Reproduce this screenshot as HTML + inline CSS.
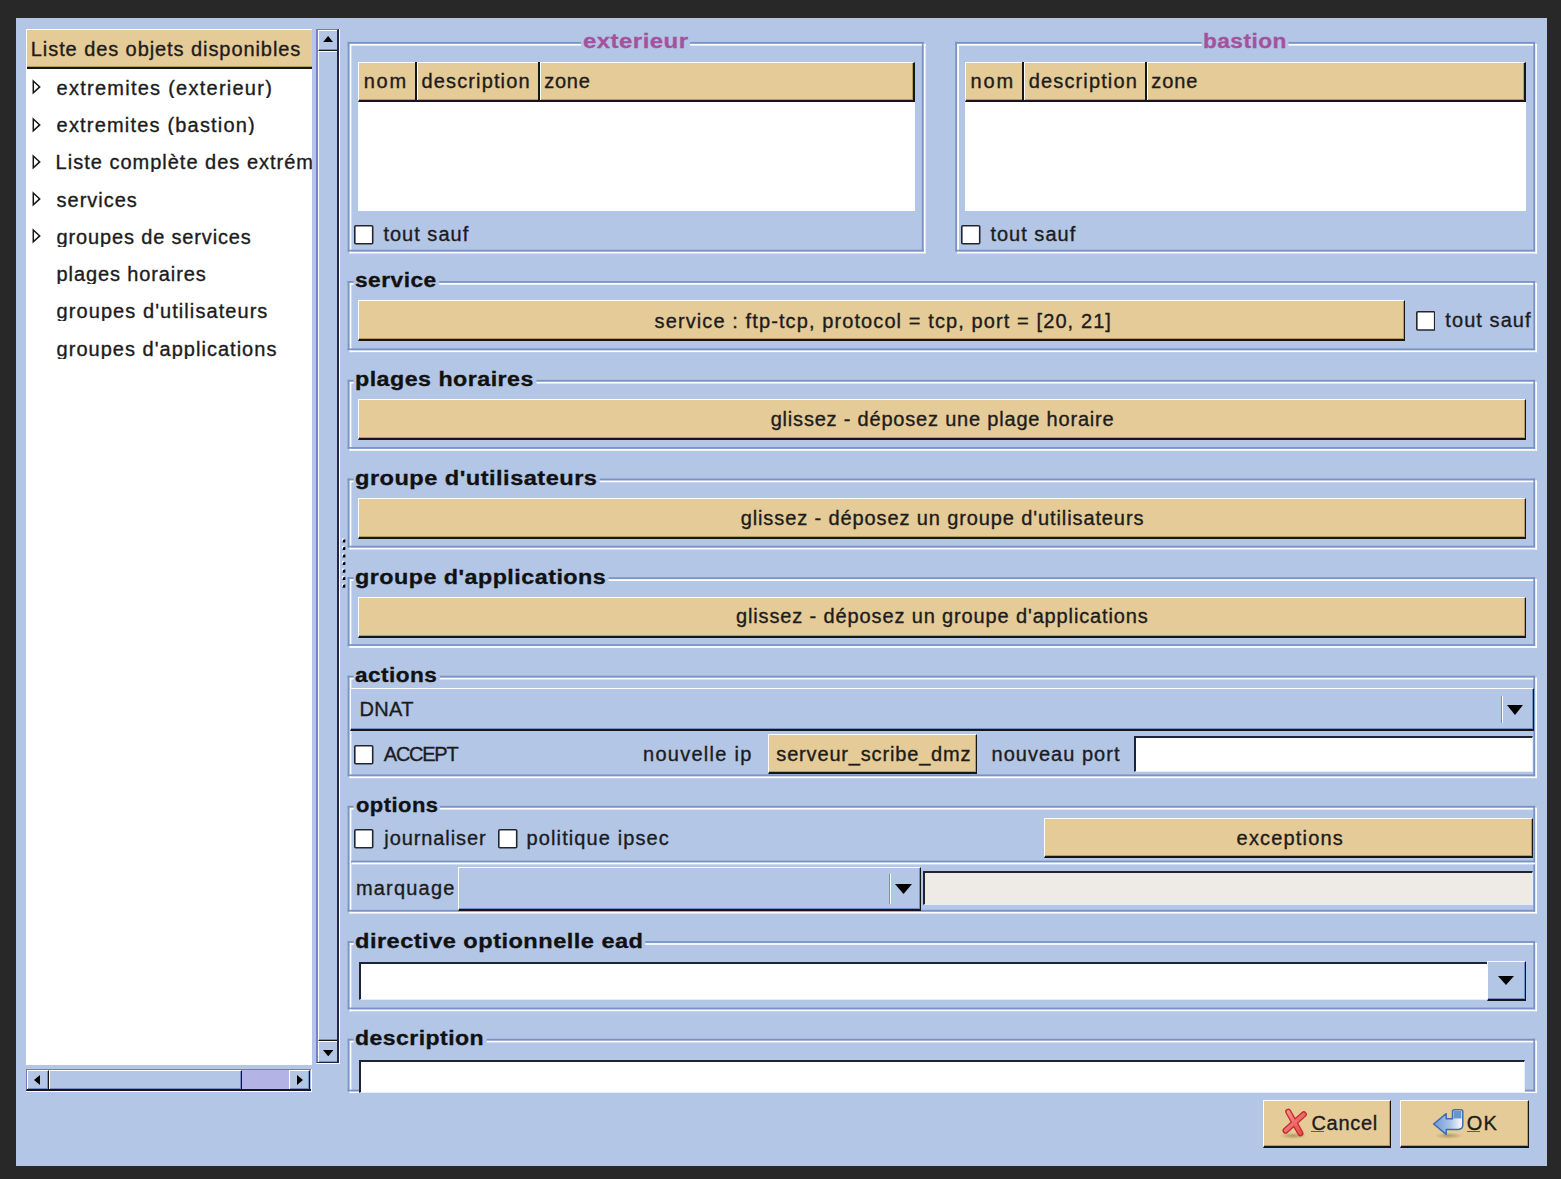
<!DOCTYPE html>
<html><head><meta charset="utf-8"><style>
html,body{margin:0;padding:0;}
body{width:1561px;height:1179px;background:#282828;position:relative;overflow:hidden;font-family:"Liberation Sans",sans-serif;}
.a{position:absolute;}
.t{font-size:20px;line-height:20px;white-space:pre;}
svg{display:block;}
</style></head><body>
<div class="a" style="left:16px;top:18px;width:1531px;height:1148px;background:#b3c6e6;"></div>
<div class="a" style="left:26px;top:29px;width:286px;height:1036px;background:#ffffff;"></div>
<div class="a" style="left:27px;top:30px;width:285px;height:39px;background:#e5cb97;border-bottom:2px solid #161616;box-sizing:border-box;box-shadow:inset 0 -1px 0 #b89a60;"></div>
<svg class="a" style="left:31px;top:79.2px" width="12" height="16"><path d="M2.3,2 L8.7,7.9 L2.3,13.8 Z" fill="none" stroke="#151515" stroke-width="1.5"/></svg>
<svg class="a" style="left:31px;top:116.5px" width="12" height="16"><path d="M2.3,2 L8.7,7.9 L2.3,13.8 Z" fill="none" stroke="#151515" stroke-width="1.5"/></svg>
<svg class="a" style="left:31px;top:153.7px" width="12" height="16"><path d="M2.3,2 L8.7,7.9 L2.3,13.8 Z" fill="none" stroke="#151515" stroke-width="1.5"/></svg>
<svg class="a" style="left:31px;top:191.0px" width="12" height="16"><path d="M2.3,2 L8.7,7.9 L2.3,13.8 Z" fill="none" stroke="#151515" stroke-width="1.5"/></svg>
<svg class="a" style="left:31px;top:228.3px" width="12" height="16"><path d="M2.3,2 L8.7,7.9 L2.3,13.8 Z" fill="none" stroke="#151515" stroke-width="1.5"/></svg>
<div class="a" style="left:316px;top:29px;width:23px;height:1034px;background:#b3c6e6;border-left:2px solid #7e7ec8;border-top:1px solid #7676c4;border-right:2px solid #20283a;border-bottom:1px solid #20283a;box-sizing:border-box;"></div>
<div class="a" style="left:339px;top:29px;width:1px;height:1035px;background:#ffffff;"></div>
<div class="a" style="left:316px;top:1063px;width:24px;height:1px;background:#ffffff;"></div>
<div class="a" style="left:318px;top:30px;width:19px;height:21px;background:#b3c6e6;border-top:1px solid #ffffff;border-left:1px solid #ffffff;border-bottom:1px solid #161616;box-sizing:border-box;box-shadow:inset 0 -1px 0 #7591c4;"></div>
<svg class="a" style="left:322.6px;top:36.2px" width="10.2" height="6.2"><path d="M0,6.2 L10.2,6.2 L5.1,0 Z" fill="#000"/></svg>
<div class="a" style="left:318px;top:51px;width:19px;height:990px;background:#b3c6e6;border-top:1px solid #ffffff;border-left:1px solid #ffffff;border-bottom:1px solid #161616;box-sizing:border-box;box-shadow:inset 0 -1px 0 #7591c4;"></div>
<div class="a" style="left:318px;top:1041px;width:19px;height:21px;background:#b3c6e6;border-top:1px solid #ffffff;border-left:1px solid #ffffff;box-sizing:border-box;box-shadow:inset 0 -1px 0 #7591c4;"></div>
<svg class="a" style="left:322.5px;top:1049.8px" width="10.5" height="6.3"><path d="M0,0 L10.5,0 L5.25,6.3 Z" fill="#000"/></svg>
<div class="a" style="left:26px;top:1069px;width:285px;height:22px;background:#b3b3e5;border-left:1px solid #7676c4;border-top:1px solid #7676c4;border-bottom:2px solid #161616;box-sizing:border-box;"></div>
<div class="a" style="left:26px;top:1091px;width:286px;height:1px;background:#ffffff;"></div>
<div class="a" style="left:311px;top:1069px;width:1px;height:23px;background:#ffffff;"></div>
<div class="a" style="left:27px;top:1070px;width:22px;height:19px;background:#b3c6e6;border-top:1px solid #ffffff;border-left:1px solid #ffffff;border-right:1px solid #161616;box-sizing:border-box;box-shadow:inset -1px -1px 0 #7591c4;"></div>
<svg class="a" style="left:34px;top:1075px" width="6" height="10"><path d="M6,0 L0,5.0 L6,10 Z" fill="#000"/></svg>
<div class="a" style="left:49px;top:1070px;width:193px;height:19px;background:#b3c6e6;border-top:1px solid #ffffff;border-left:1px solid #ffffff;border-right:1px solid #161616;box-sizing:border-box;box-shadow:inset -1px -1px 0 #7591c4;"></div>
<div class="a" style="left:289px;top:1070px;width:21px;height:19px;background:#b3c6e6;border-top:1px solid #ffffff;border-left:1px solid #ffffff;border-right:1px solid #161616;box-sizing:border-box;box-shadow:inset -1px -1px 0 #7591c4;"></div>
<svg class="a" style="left:297px;top:1075px" width="6" height="10"><path d="M0,0 L6,5.0 L0,10 Z" fill="#000"/></svg>
<svg class="a" style="left:340px;top:530px" width="8" height="70"><rect x="2" y="8.50" width="2.2" height="2.2" fill="#fff"/><path d="M5.2,8.90 L5.2,12.30 L2.2,12.30 Z" fill="#000"/><rect x="3" y="9.70" width="2.2" height="2.6" fill="#000"/><rect x="2" y="16.02" width="2.2" height="2.2" fill="#fff"/><path d="M5.2,16.42 L5.2,19.82 L2.2,19.82 Z" fill="#000"/><rect x="3" y="17.22" width="2.2" height="2.6" fill="#000"/><rect x="2" y="23.54" width="2.2" height="2.2" fill="#fff"/><path d="M5.2,23.94 L5.2,27.34 L2.2,27.34 Z" fill="#000"/><rect x="3" y="24.74" width="2.2" height="2.6" fill="#000"/><rect x="2" y="31.06" width="2.2" height="2.2" fill="#fff"/><path d="M5.2,31.46 L5.2,34.86 L2.2,34.86 Z" fill="#000"/><rect x="3" y="32.26" width="2.2" height="2.6" fill="#000"/><rect x="2" y="38.58" width="2.2" height="2.2" fill="#fff"/><path d="M5.2,38.98 L5.2,42.38 L2.2,42.38 Z" fill="#000"/><rect x="3" y="39.78" width="2.2" height="2.6" fill="#000"/><rect x="2" y="46.10" width="2.2" height="2.2" fill="#fff"/><path d="M5.2,46.50 L5.2,49.90 L2.2,49.90 Z" fill="#000"/><rect x="3" y="47.30" width="2.2" height="2.6" fill="#000"/><rect x="2" y="53.62" width="2.2" height="2.2" fill="#fff"/><path d="M5.2,54.02 L5.2,57.42 L2.2,57.42 Z" fill="#000"/><rect x="3" y="54.82" width="2.2" height="2.6" fill="#000"/></svg>
<svg class="a" style="left:345px;top:39px" width="582.20" height="215.80"><rect x="4.65" y="4.95" width="231.45" height="1.7" fill="#ffffff"/><rect x="345.10" y="4.95" width="235.45" height="1.7" fill="#ffffff"/><rect x="4.65" y="4.95" width="1.7" height="209.50" fill="#ffffff"/><rect x="4.65" y="212.75" width="575.90" height="1.7" fill="#ffffff"/><rect x="578.85" y="4.95" width="1.7" height="209.50" fill="#ffffff"/><rect x="2.65" y="2.95" width="233.45" height="1.7" fill="#7893c3"/><rect x="345.10" y="2.95" width="233.45" height="1.7" fill="#7893c3"/><rect x="2.65" y="2.95" width="1.7" height="209.50" fill="#7893c3"/><rect x="2.65" y="210.75" width="575.90" height="1.7" fill="#7893c3"/><rect x="576.85" y="2.95" width="1.7" height="209.50" fill="#7893c3"/></svg>
<div class="a" style="left:358px;top:62px;width:557px;height:149px;background:#ffffff;"></div>
<div class="a" style="left:358px;top:62px;width:557px;height:40px;background:#e5cb97;border-top:1px solid #ffffff;border-left:1px solid #ffffff;border-right:2px solid #161616;border-bottom:2px solid #161616;box-sizing:border-box;box-shadow:inset -1px -1px 0 #b89a60;"></div>
<div class="a" style="left:415px;top:62px;width:2px;height:39px;background:#161616;"></div>
<div class="a" style="left:417px;top:62px;width:1px;height:38px;background:#ffffff;"></div>
<div class="a" style="left:538px;top:62px;width:2px;height:39px;background:#161616;"></div>
<div class="a" style="left:540px;top:62px;width:1px;height:38px;background:#ffffff;"></div>
<svg class="a" style="left:354px;top:225px" width="19.5" height="19.5"><rect x="0.8" y="0.8" width="17.9" height="17.9" rx="1" fill="#fff" stroke="#23272d" stroke-width="1.6"/></svg>
<svg class="a" style="left:953px;top:39px" width="586.10" height="215.80"><rect x="4.25" y="4.95" width="244.45" height="1.7" fill="#ffffff"/><rect x="335.40" y="4.95" width="248.65" height="1.7" fill="#ffffff"/><rect x="4.25" y="4.95" width="1.7" height="209.50" fill="#ffffff"/><rect x="4.25" y="212.75" width="579.80" height="1.7" fill="#ffffff"/><rect x="582.35" y="4.95" width="1.7" height="209.50" fill="#ffffff"/><rect x="2.25" y="2.95" width="246.45" height="1.7" fill="#7893c3"/><rect x="335.40" y="2.95" width="246.65" height="1.7" fill="#7893c3"/><rect x="2.25" y="2.95" width="1.7" height="209.50" fill="#7893c3"/><rect x="2.25" y="210.75" width="579.80" height="1.7" fill="#7893c3"/><rect x="580.35" y="2.95" width="1.7" height="209.50" fill="#7893c3"/></svg>
<div class="a" style="left:965px;top:62px;width:561px;height:149px;background:#ffffff;"></div>
<div class="a" style="left:965px;top:62px;width:561px;height:40px;background:#e5cb97;border-top:1px solid #ffffff;border-left:1px solid #ffffff;border-right:2px solid #161616;border-bottom:2px solid #161616;box-sizing:border-box;box-shadow:inset -1px -1px 0 #b89a60;"></div>
<div class="a" style="left:1022px;top:62px;width:2px;height:39px;background:#161616;"></div>
<div class="a" style="left:1024px;top:62px;width:1px;height:38px;background:#ffffff;"></div>
<div class="a" style="left:1145px;top:62px;width:2px;height:39px;background:#161616;"></div>
<div class="a" style="left:1147px;top:62px;width:1px;height:38px;background:#ffffff;"></div>
<svg class="a" style="left:961px;top:225px" width="19.5" height="19.5"><rect x="0.8" y="0.8" width="17.9" height="17.9" rx="1" fill="#fff" stroke="#23272d" stroke-width="1.6"/></svg>
<svg class="a" style="left:345px;top:278px" width="1193.70" height="75.40"><rect x="4.65" y="5.05" width="3.95" height="1.7" fill="#ffffff"/><rect x="94.20" y="5.05" width="1097.85" height="1.7" fill="#ffffff"/><rect x="4.65" y="5.05" width="1.7" height="69.10" fill="#ffffff"/><rect x="4.65" y="72.45" width="1187.40" height="1.7" fill="#ffffff"/><rect x="1190.35" y="5.05" width="1.7" height="69.10" fill="#ffffff"/><rect x="2.65" y="3.05" width="5.95" height="1.7" fill="#7893c3"/><rect x="94.20" y="3.05" width="1095.85" height="1.7" fill="#7893c3"/><rect x="2.65" y="3.05" width="1.7" height="69.10" fill="#7893c3"/><rect x="2.65" y="70.45" width="1187.40" height="1.7" fill="#7893c3"/><rect x="1188.35" y="3.05" width="1.7" height="69.10" fill="#7893c3"/></svg>
<div class="a" style="left:358px;top:300px;width:1047px;height:41px;background:#e5cb97;border-top:1px solid #ffffff;border-left:1px solid #ffffff;border-right:1px solid #161616;border-bottom:2px solid #161616;box-sizing:border-box;box-shadow:inset -1px -1px 0 #b89a60;"></div>
<svg class="a" style="left:1415.5px;top:311px" width="19.5" height="19.80000000000001"><rect x="0.8" y="0.8" width="17.9" height="18.20000000000001" rx="1" fill="#fff" stroke="#23272d" stroke-width="1.6"/></svg>
<svg class="a" style="left:345px;top:377px" width="1193.70" height="75.20"><rect x="4.65" y="4.85" width="3.95" height="1.7" fill="#ffffff"/><rect x="191.50" y="4.85" width="1000.55" height="1.7" fill="#ffffff"/><rect x="4.65" y="4.85" width="1.7" height="68.90" fill="#ffffff"/><rect x="4.65" y="72.05" width="1187.40" height="1.7" fill="#ffffff"/><rect x="1190.35" y="4.85" width="1.7" height="68.90" fill="#ffffff"/><rect x="2.65" y="2.85" width="5.95" height="1.7" fill="#7893c3"/><rect x="191.50" y="2.85" width="998.55" height="1.7" fill="#7893c3"/><rect x="2.65" y="2.85" width="1.7" height="68.90" fill="#7893c3"/><rect x="2.65" y="70.05" width="1187.40" height="1.7" fill="#7893c3"/><rect x="1188.35" y="2.85" width="1.7" height="68.90" fill="#7893c3"/></svg>
<div class="a" style="left:358px;top:399px;width:1168px;height:41px;background:#e5cb97;border-top:1px solid #ffffff;border-left:1px solid #ffffff;border-right:1px solid #161616;border-bottom:2px solid #161616;box-sizing:border-box;box-shadow:inset -1px -1px 0 #b89a60;"></div>
<svg class="a" style="left:345px;top:476px" width="1193.70" height="75.20"><rect x="4.65" y="4.55" width="3.95" height="1.7" fill="#ffffff"/><rect x="254.80" y="4.55" width="937.25" height="1.7" fill="#ffffff"/><rect x="4.65" y="4.55" width="1.7" height="68.90" fill="#ffffff"/><rect x="4.65" y="71.75" width="1187.40" height="1.7" fill="#ffffff"/><rect x="1190.35" y="4.55" width="1.7" height="68.90" fill="#ffffff"/><rect x="2.65" y="2.55" width="5.95" height="1.7" fill="#7893c3"/><rect x="254.80" y="2.55" width="935.25" height="1.7" fill="#7893c3"/><rect x="2.65" y="2.55" width="1.7" height="68.90" fill="#7893c3"/><rect x="2.65" y="69.75" width="1187.40" height="1.7" fill="#7893c3"/><rect x="1188.35" y="2.55" width="1.7" height="68.90" fill="#7893c3"/></svg>
<div class="a" style="left:358px;top:498px;width:1168px;height:41px;background:#e5cb97;border-top:1px solid #ffffff;border-left:1px solid #ffffff;border-right:1px solid #161616;border-bottom:2px solid #161616;box-sizing:border-box;box-shadow:inset -1px -1px 0 #b89a60;"></div>
<svg class="a" style="left:345px;top:575px" width="1193.70" height="74.90"><rect x="4.65" y="4.25" width="3.95" height="1.7" fill="#ffffff"/><rect x="263.60" y="4.25" width="928.45" height="1.7" fill="#ffffff"/><rect x="4.65" y="4.25" width="1.7" height="68.60" fill="#ffffff"/><rect x="4.65" y="71.15" width="1187.40" height="1.7" fill="#ffffff"/><rect x="1190.35" y="4.25" width="1.7" height="68.60" fill="#ffffff"/><rect x="2.65" y="2.25" width="5.95" height="1.7" fill="#7893c3"/><rect x="263.60" y="2.25" width="926.45" height="1.7" fill="#7893c3"/><rect x="2.65" y="2.25" width="1.7" height="68.60" fill="#7893c3"/><rect x="2.65" y="69.15" width="1187.40" height="1.7" fill="#7893c3"/><rect x="1188.35" y="2.25" width="1.7" height="68.60" fill="#7893c3"/></svg>
<div class="a" style="left:358px;top:597px;width:1168px;height:41px;background:#e5cb97;border-top:1px solid #ffffff;border-left:1px solid #ffffff;border-right:1px solid #161616;border-bottom:2px solid #161616;box-sizing:border-box;box-shadow:inset -1px -1px 0 #b89a60;"></div>
<svg class="a" style="left:345px;top:673px" width="1193.70" height="106.70"><rect x="4.65" y="4.75" width="3.95" height="1.7" fill="#ffffff"/><rect x="94.80" y="4.75" width="1097.25" height="1.7" fill="#ffffff"/><rect x="4.65" y="4.75" width="1.7" height="100.40" fill="#ffffff"/><rect x="4.65" y="103.45" width="1187.40" height="1.7" fill="#ffffff"/><rect x="1190.35" y="4.75" width="1.7" height="100.40" fill="#ffffff"/><rect x="2.65" y="2.75" width="5.95" height="1.7" fill="#7893c3"/><rect x="94.80" y="2.75" width="1095.25" height="1.7" fill="#7893c3"/><rect x="2.65" y="2.75" width="1.7" height="100.40" fill="#7893c3"/><rect x="2.65" y="101.45" width="1187.40" height="1.7" fill="#7893c3"/><rect x="1188.35" y="2.75" width="1.7" height="100.40" fill="#7893c3"/></svg>
<div class="a" style="left:350px;top:688px;width:1184px;height:43px;background:#b3c6e6;border-top:1px solid #ffffff;border-left:1px solid #ffffff;border-right:1px solid #161616;border-bottom:2px solid #161616;box-sizing:border-box;box-shadow:inset -1px -1px 0 #7591c4;"></div>
<div class="a" style="left:1501px;top:696px;width:1px;height:27px;background:#7591c4;"></div>
<div class="a" style="left:1502px;top:696px;width:1px;height:27px;background:#ffffff;"></div>
<svg class="a" style="left:1507px;top:705px" width="16" height="10"><path d="M0,0 L16,0 L8.0,10 Z" fill="#000"/></svg>
<svg class="a" style="left:354px;top:745px" width="19.5" height="19.5"><rect x="0.8" y="0.8" width="17.9" height="17.9" rx="1" fill="#fff" stroke="#23272d" stroke-width="1.6"/></svg>
<div class="a" style="left:768px;top:734px;width:209px;height:40px;background:#e5cb97;border-top:1px solid #ffffff;border-left:1px solid #ffffff;border-right:1px solid #161616;border-bottom:2px solid #161616;box-sizing:border-box;box-shadow:inset -1px -1px 0 #b89a60;"></div>
<div class="a" style="left:1134px;top:736px;width:399px;height:36px;background:#ffffff;border-top:2px solid #1c2436;border-left:2px solid #1c2436;border-bottom:1px solid #e6eefa;box-sizing:border-box;border-right:1px solid #e6eefa;"></div>
<svg class="a" style="left:345px;top:803px" width="1193.70" height="112.00"><rect x="4.65" y="4.85" width="3.95" height="1.7" fill="#ffffff"/><rect x="94.80" y="4.85" width="1097.25" height="1.7" fill="#ffffff"/><rect x="4.65" y="4.85" width="1.7" height="105.70" fill="#ffffff"/><rect x="4.65" y="108.85" width="1187.40" height="1.7" fill="#ffffff"/><rect x="1190.35" y="4.85" width="1.7" height="105.70" fill="#ffffff"/><rect x="2.65" y="2.85" width="5.95" height="1.7" fill="#7893c3"/><rect x="94.80" y="2.85" width="1095.25" height="1.7" fill="#7893c3"/><rect x="2.65" y="2.85" width="1.7" height="105.70" fill="#7893c3"/><rect x="2.65" y="106.85" width="1187.40" height="1.7" fill="#7893c3"/><rect x="1188.35" y="2.85" width="1.7" height="105.70" fill="#7893c3"/></svg>
<svg class="a" style="left:354px;top:829px" width="19.5" height="19.5"><rect x="0.8" y="0.8" width="17.9" height="17.9" rx="1" fill="#fff" stroke="#23272d" stroke-width="1.6"/></svg>
<svg class="a" style="left:498px;top:829px" width="19.5" height="19.5"><rect x="0.8" y="0.8" width="17.9" height="17.9" rx="1" fill="#fff" stroke="#23272d" stroke-width="1.6"/></svg>
<div class="a" style="left:1044px;top:818px;width:489px;height:40px;background:#e5cb97;border-top:1px solid #ffffff;border-left:1px solid #ffffff;border-right:1px solid #161616;border-bottom:2px solid #161616;box-sizing:border-box;box-shadow:inset -1px -1px 0 #b89a60;"></div>
<svg class="a" style="left:350px;top:858px" width="1190" height="10"><rect x="1" y="2.65" width="1184" height="1.7" fill="#7893c3"/><rect x="2" y="4.65" width="1183" height="1.7" fill="#fff"/></svg>
<div class="a" style="left:458px;top:867px;width:463px;height:44px;background:#b3c6e6;border-top:1px solid #ffffff;border-left:1px solid #ffffff;border-right:1px solid #161616;border-bottom:2px solid #161616;box-sizing:border-box;box-shadow:inset -1px -1px 0 #7591c4;"></div>
<div class="a" style="left:889px;top:874px;width:1px;height:30px;background:#7591c4;"></div>
<div class="a" style="left:890px;top:874px;width:1px;height:30px;background:#ffffff;"></div>
<svg class="a" style="left:895px;top:884px" width="17" height="10"><path d="M0,0 L17,0 L8.5,10 Z" fill="#000"/></svg>
<div class="a" style="left:923px;top:871px;width:610px;height:34px;background:#eeeae5;border-top:2px solid #1c2436;border-left:2px solid #1c2436;border-bottom:1px solid #e6eefa;box-sizing:border-box;border-right:1px solid #e6eefa;"></div>
<svg class="a" style="left:345px;top:939px" width="1193.70" height="74.40"><rect x="4.65" y="4.15" width="3.95" height="1.7" fill="#ffffff"/><rect x="300.30" y="4.15" width="891.75" height="1.7" fill="#ffffff"/><rect x="4.65" y="4.15" width="1.7" height="68.10" fill="#ffffff"/><rect x="4.65" y="70.55" width="1187.40" height="1.7" fill="#ffffff"/><rect x="1190.35" y="4.15" width="1.7" height="68.10" fill="#ffffff"/><rect x="2.65" y="2.15" width="5.95" height="1.7" fill="#7893c3"/><rect x="300.30" y="2.15" width="889.75" height="1.7" fill="#7893c3"/><rect x="2.65" y="2.15" width="1.7" height="68.10" fill="#7893c3"/><rect x="2.65" y="68.55" width="1187.40" height="1.7" fill="#7893c3"/><rect x="1188.35" y="2.15" width="1.7" height="68.10" fill="#7893c3"/></svg>
<div class="a" style="left:359px;top:962px;width:1128px;height:38px;background:#ffffff;border-top:2px solid #1c2436;border-left:2px solid #1c2436;border-bottom:1px solid #e6eefa;box-sizing:border-box;"></div>
<div class="a" style="left:1487px;top:961px;width:39px;height:40px;background:#b3c6e6;border-top:1px solid #ffffff;border-left:1px solid #ffffff;border-right:1px solid #161616;border-bottom:2px solid #161616;box-sizing:border-box;box-shadow:inset -1px -1px 0 #7591c4;"></div>
<svg class="a" style="left:1498px;top:976px" width="16" height="9"><path d="M0,0 L16,0 L8.0,9 Z" fill="#000"/></svg>
<svg class="a" style="left:345px;top:1036px" width="1193.70" height="58.90"><rect x="4.65" y="4.75" width="3.95" height="1.7" fill="#ffffff"/><rect x="141.80" y="4.75" width="1050.25" height="1.7" fill="#ffffff"/><rect x="4.65" y="4.75" width="1.7" height="52.60" fill="#ffffff"/><rect x="4.65" y="55.65" width="1187.40" height="1.7" fill="#ffffff"/><rect x="1190.35" y="4.75" width="1.7" height="52.60" fill="#ffffff"/><rect x="2.65" y="2.75" width="5.95" height="1.7" fill="#7893c3"/><rect x="141.80" y="2.75" width="1048.25" height="1.7" fill="#7893c3"/><rect x="2.65" y="2.75" width="1.7" height="52.60" fill="#7893c3"/><rect x="2.65" y="53.65" width="1187.40" height="1.7" fill="#7893c3"/><rect x="1188.35" y="2.75" width="1.7" height="52.60" fill="#7893c3"/></svg>
<div class="a" style="left:359px;top:1060px;width:1166px;height:33px;background:#ffffff;border-top:2px solid #1c2436;border-left:2px solid #1c2436;border-bottom:1px solid #e6eefa;box-sizing:border-box;border-right:1px solid #e6eefa;"></div>
<div class="a" style="left:340px;top:1093px;width:1207px;height:73px;background:#b3c6e6;"></div>
<div class="a" style="left:1263px;top:1100px;width:128px;height:48px;background:#e5cb97;border-top:1px solid #ffffff;border-left:1px solid #ffffff;border-right:1px solid #161616;border-bottom:2px solid #161616;box-sizing:border-box;box-shadow:inset -1px -1px 0 #b89a60;"></div>
<div class="a" style="left:1400px;top:1100px;width:129px;height:48px;background:#e5cb97;border-top:1px solid #ffffff;border-left:1px solid #ffffff;border-right:1px solid #161616;border-bottom:2px solid #161616;box-sizing:border-box;box-shadow:inset -1px -1px 0 #b89a60;"></div>
<div class="a" style="left:1311px;top:1130.8px;width:13px;height:1.5px;background:#6a5c40;"></div>
<div class="a" style="left:1466.5px;top:1130.8px;width:13.5px;height:1.5px;background:#6a5c40;"></div>
<svg class="a" style="left:1270px;top:1100px" width="45" height="45"><defs><radialGradient id="sh"><stop offset="0" stop-color="#9c8658" stop-opacity="0.75"/><stop offset="1" stop-color="#9c8658" stop-opacity="0"/></radialGradient>
<linearGradient id="xg" x1="0" y1="0" x2="1" y2="1"><stop offset="0" stop-color="#f49090"/><stop offset="1" stop-color="#e84848"/></linearGradient></defs>
<ellipse cx="23" cy="35.8" rx="14" ry="3.2" fill="url(#sh)"/>
<path d="M18.3,11.8 L30.4,33.2 M33.8,14.3 L15.6,30.6" stroke="#c42a2a" stroke-width="6.2" stroke-linecap="round" fill="none"/>
<path d="M18.3,11.8 L30.4,33.2 M33.8,14.3 L15.6,30.6" stroke="url(#xg)" stroke-width="3.6" stroke-linecap="round" fill="none"/>
</svg>
<svg class="a" style="left:1425px;top:1100px" width="45" height="45"><defs><radialGradient id="sh2"><stop offset="0" stop-color="#9c8658" stop-opacity="0.75"/><stop offset="1" stop-color="#9c8658" stop-opacity="0"/></radialGradient>
<linearGradient id="ag" x1="0" y1="0" x2="1" y2="0"><stop offset="0" stop-color="#6e98d4"/><stop offset="0.55" stop-color="#a8c2e4"/><stop offset="0.9" stop-color="#eef2fa"/></linearGradient></defs>
<ellipse cx="23.7" cy="35.7" rx="14" ry="3.2" fill="url(#sh2)"/>
<path d="M8.6,24 L21.2,13.7 L21.2,18.7 L27.5,18.7 L27.5,11.7 Q27.5,9.7 29.5,9.7 L35.8,9.7 Q37.8,9.7 37.8,11.7 L37.8,24.8 Q37.8,29.4 33.2,29.4 L21.2,29.4 L21.2,34.4 Z" fill="url(#ag)" stroke="#3d6cb4" stroke-width="1.5" stroke-linejoin="round"/>
<rect x="28.8" y="11" width="7.6" height="7.4" fill="#6a94cc"/>
</svg>
<div class="a t" style="left:30.80px;top:38.80px;letter-spacing:0.922px;color:#1c1c1c;-webkit-text-stroke:0.35px #1c1c1c;">Liste des objets disponibles</div>
<div class="a t" style="left:56.60px;top:77.70px;letter-spacing:1.252px;color:#1c1c1c;-webkit-text-stroke:0.35px #1c1c1c;width:255.40px;overflow:hidden;">extremites (exterieur)</div>
<div class="a t" style="left:56.60px;top:114.97px;letter-spacing:1.184px;color:#1c1c1c;-webkit-text-stroke:0.35px #1c1c1c;width:255.40px;overflow:hidden;">extremites (bastion)</div>
<div class="a t" style="left:55.60px;top:152.24px;letter-spacing:1.000px;color:#1c1c1c;-webkit-text-stroke:0.35px #1c1c1c;width:256.40px;overflow:hidden;">Liste complète des extrémités</div>
<div class="a t" style="left:56.60px;top:189.51px;letter-spacing:0.986px;color:#1c1c1c;-webkit-text-stroke:0.35px #1c1c1c;width:255.40px;overflow:hidden;">services</div>
<div class="a t" style="left:56.60px;top:226.78px;letter-spacing:0.844px;color:#1c1c1c;-webkit-text-stroke:0.35px #1c1c1c;width:255.40px;overflow:hidden;">groupes de services</div>
<div class="a t" style="left:56.60px;top:264.05px;letter-spacing:0.886px;color:#1c1c1c;-webkit-text-stroke:0.35px #1c1c1c;width:255.40px;overflow:hidden;">plages horaires</div>
<div class="a t" style="left:56.60px;top:301.32px;letter-spacing:1.067px;color:#1c1c1c;-webkit-text-stroke:0.35px #1c1c1c;width:255.40px;overflow:hidden;">groupes d'utilisateurs</div>
<div class="a t" style="left:56.60px;top:338.59px;letter-spacing:1.019px;color:#1c1c1c;-webkit-text-stroke:0.35px #1c1c1c;width:255.40px;overflow:hidden;">groupes d'applications</div>
<div class="a t" style="left:582.70px;top:30.90px;letter-spacing:0.400px;color:#a4529e;font-weight:bold;transform:scaleX(1.1972);transform-origin:0 0;-webkit-text-stroke:0.3px #a4529e;">exterieur</div>
<div class="a t" style="left:363.70px;top:71.30px;letter-spacing:1.800px;color:#1c1c1c;-webkit-text-stroke:0.35px #1c1c1c;">nom</div>
<div class="a t" style="left:421.50px;top:71.30px;letter-spacing:1.130px;color:#1c1c1c;-webkit-text-stroke:0.35px #1c1c1c;">description</div>
<div class="a t" style="left:544.20px;top:71.30px;letter-spacing:0.767px;color:#1c1c1c;-webkit-text-stroke:0.35px #1c1c1c;">zone</div>
<div class="a t" style="left:383.40px;top:223.80px;letter-spacing:1.013px;color:#1c1c1c;-webkit-text-stroke:0.35px #1c1c1c;">tout sauf</div>
<div class="a t" style="left:1203.37px;top:30.90px;letter-spacing:0.400px;color:#a4529e;font-weight:bold;transform:scaleX(1.1331);transform-origin:0 0;-webkit-text-stroke:0.3px #a4529e;">bastion</div>
<div class="a t" style="left:970.60px;top:71.30px;letter-spacing:1.800px;color:#1c1c1c;-webkit-text-stroke:0.35px #1c1c1c;">nom</div>
<div class="a t" style="left:1028.80px;top:71.30px;letter-spacing:1.130px;color:#1c1c1c;-webkit-text-stroke:0.35px #1c1c1c;">description</div>
<div class="a t" style="left:1151.30px;top:71.30px;letter-spacing:0.933px;color:#1c1c1c;-webkit-text-stroke:0.35px #1c1c1c;">zone</div>
<div class="a t" style="left:990.40px;top:223.80px;letter-spacing:1.013px;color:#1c1c1c;-webkit-text-stroke:0.35px #1c1c1c;">tout sauf</div>
<div class="a t" style="left:355.46px;top:270.30px;letter-spacing:0.400px;color:#111;font-weight:bold;transform:scaleX(1.1383);transform-origin:0 0;-webkit-text-stroke:0.3px #111;">service</div>
<div class="a t" style="left:654.60px;top:310.70px;letter-spacing:1.100px;color:#1c1c1c;-webkit-text-stroke:0.35px #1c1c1c;">service : ftp-tcp, protocol = tcp, port = [20, 21]</div>
<div class="a t" style="left:1445.30px;top:310.00px;letter-spacing:1.075px;color:#1c1c1c;-webkit-text-stroke:0.35px #1c1c1c;">tout sauf</div>
<div class="a t" style="left:355.44px;top:369.00px;letter-spacing:0.400px;color:#111;font-weight:bold;transform:scaleX(1.1629);transform-origin:0 0;-webkit-text-stroke:0.3px #111;">plages horaires</div>
<div class="a t" style="left:770.70px;top:409.20px;letter-spacing:0.800px;color:#1c1c1c;-webkit-text-stroke:0.35px #1c1c1c;">glissez - déposez une plage horaire</div>
<div class="a t" style="left:355.42px;top:467.80px;letter-spacing:0.400px;color:#111;font-weight:bold;transform:scaleX(1.1803);transform-origin:0 0;-webkit-text-stroke:0.3px #111;">groupe d'utilisateurs</div>
<div class="a t" style="left:740.70px;top:507.60px;letter-spacing:0.890px;color:#1c1c1c;-webkit-text-stroke:0.35px #1c1c1c;">glissez - déposez un groupe d'utilisateurs</div>
<div class="a t" style="left:355.43px;top:566.50px;letter-spacing:0.400px;color:#111;font-weight:bold;transform:scaleX(1.1662);transform-origin:0 0;-webkit-text-stroke:0.3px #111;">groupe d'applications</div>
<div class="a t" style="left:736.00px;top:606.00px;letter-spacing:0.866px;color:#1c1c1c;-webkit-text-stroke:0.35px #1c1c1c;">glissez - déposez un groupe d'applications</div>
<div class="a t" style="left:355.47px;top:665.20px;letter-spacing:0.400px;color:#111;font-weight:bold;transform:scaleX(1.1307);transform-origin:0 0;-webkit-text-stroke:0.3px #111;">actions</div>
<div class="a t" style="left:359.50px;top:699.40px;letter-spacing:0.333px;color:#1c1c1c;-webkit-text-stroke:0.35px #1c1c1c;">DNAT</div>
<div class="a t" style="left:383.80px;top:744.00px;letter-spacing:-1.260px;color:#1c1c1c;-webkit-text-stroke:0.35px #1c1c1c;">ACCEPT</div>
<div class="a t" style="left:643.00px;top:744.20px;letter-spacing:1.270px;color:#1c1c1c;-webkit-text-stroke:0.35px #1c1c1c;">nouvelle ip</div>
<div class="a t" style="left:776.30px;top:744.20px;letter-spacing:0.835px;color:#1c1c1c;-webkit-text-stroke:0.35px #1c1c1c;">serveur_scribe_dmz</div>
<div class="a t" style="left:991.50px;top:744.20px;letter-spacing:1.018px;color:#1c1c1c;-webkit-text-stroke:0.35px #1c1c1c;">nouveau port</div>
<div class="a t" style="left:355.50px;top:795.20px;letter-spacing:0.400px;color:#111;font-weight:bold;transform:scaleX(1.0994);transform-origin:0 0;-webkit-text-stroke:0.3px #111;">options</div>
<div class="a t" style="left:384.30px;top:828.00px;letter-spacing:0.900px;color:#1c1c1c;-webkit-text-stroke:0.35px #1c1c1c;">journaliser</div>
<div class="a t" style="left:526.60px;top:828.00px;letter-spacing:1.100px;color:#1c1c1c;-webkit-text-stroke:0.35px #1c1c1c;">politique ipsec</div>
<div class="a t" style="left:1236.60px;top:828.00px;letter-spacing:1.167px;color:#1c1c1c;-webkit-text-stroke:0.35px #1c1c1c;">exceptions</div>
<div class="a t" style="left:355.90px;top:878.00px;letter-spacing:1.200px;color:#1c1c1c;-webkit-text-stroke:0.35px #1c1c1c;">marquage</div>
<div class="a t" style="left:355.42px;top:930.50px;letter-spacing:0.400px;color:#111;font-weight:bold;transform:scaleX(1.1800);transform-origin:0 0;-webkit-text-stroke:0.3px #111;">directive optionnelle ead</div>
<div class="a t" style="left:355.45px;top:1028.00px;letter-spacing:0.400px;color:#111;font-weight:bold;transform:scaleX(1.1509);transform-origin:0 0;-webkit-text-stroke:0.3px #111;">description</div>
<div class="a t" style="left:1311.40px;top:1112.80px;letter-spacing:0.720px;color:#1c1c1c;-webkit-text-stroke:0.35px #1c1c1c;">Cancel</div>
<div class="a t" style="left:1466.70px;top:1112.80px;letter-spacing:1.200px;color:#1c1c1c;-webkit-text-stroke:0.35px #1c1c1c;">OK</div>
</body></html>
